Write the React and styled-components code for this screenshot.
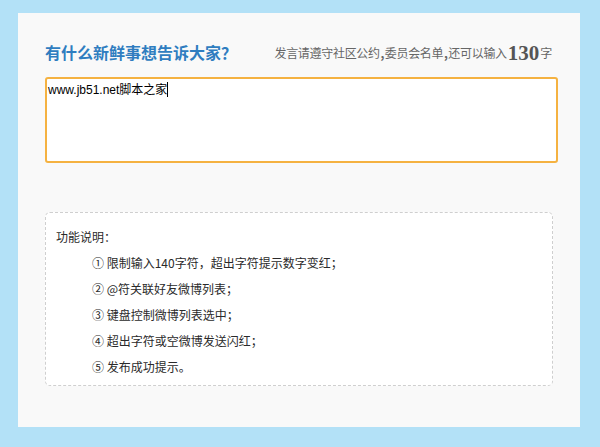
import React from "react";
import styled, { createGlobalStyle } from "styled-components";

const Global = createGlobalStyle`
  html, body { margin: 0; padding: 0; background: #b3e1f7; }
  body { font-family: "Liberation Sans", Arial, "Noto Sans CJK SC", sans-serif; }
`;

const Page = styled.div`
  padding: 13px 0 20px 18px;
`;

const Panel = styled.div`
  box-sizing: border-box;
  width: 562px;
  height: 414px;
  background: #f9f9f9;
  padding: 27px 22px 0 27px;
`;

const Header = styled.div`
  display: flex;
  align-items: center;
  justify-content: space-between;
  height: 24px;
  padding-right: 6px;
  margin-bottom: 13px;
`;

const Title = styled.h2`
  margin: 0;
  font-family: "Noto Sans CJK SC", sans-serif;
  font-size: 16px;
  font-weight: 700;
  letter-spacing: 0;
  color: #2f7dc0;
  line-height: 24px;
`;

const Counter = styled.div`
  display: flex;
  align-items: center;
  font-family: "Noto Sans CJK SC", sans-serif;
  font-size: 12px;
  color: #666;
  letter-spacing: -0.3px;
`;

const Comma = styled.span`
  display: inline-block;
  width: 5px;
  text-align: center;
  font-weight: 700;
`;

const Count = styled.span`
  font-family: "Liberation Serif", "DejaVu Serif", serif;
  font-size: 21px;
  font-weight: 700;
  color: #555;
  letter-spacing: 0;
  margin: 2px 1px 0;
  line-height: 20px;
`;

const Input = styled.div`
  box-sizing: border-box;
  width: 513px;
  height: 86px;
  background: #fff;
  border: 2px solid #f5b241;
  border-radius: 3px;
  padding: 3px 1px;
  font-size: 12px;
  line-height: 14px;
  color: #000;
`;

const Caret = styled.span`
  display: inline-block;
  width: 1px;
  height: 15px;
  background: #000;
  vertical-align: -3px;
`;

const Info = styled.div`
  box-sizing: border-box;
  width: 508px;
  height: 174px;
  margin-top: 49px;
  background: #fff;
  border: 1px dashed #cfcfcf;
  border-radius: 5px;
  padding: 11px 10px 0 10px;
  font-family: "Noto Sans CJK SC", sans-serif;
  font-size: 12px;
  line-height: 26px;
  color: #2a2a2a;
`;

const InfoTitle = styled.div``;

const List = styled.ul`
  list-style: none;
  margin: 0;
  padding: 0 0 0 36px;
`;

const Item = styled.li``;

const items = [
  "① 限制输入140字符，超出字符提示数字变红；",
  "② @符关联好友微博列表；",
  "③ 键盘控制微博列表选中；",
  "④ 超出字符或空微博发送闪红；",
  "⑤ 发布成功提示。",
];

export default function App() {
  return (
    <>
      <Global />
      <Page>
        <Panel>
          <Header>
            <Title>有什么新鲜事想告诉大家？</Title>
            <Counter>
              发言请遵守社区公约<Comma>,</Comma>委员会名单<Comma>,</Comma>还可以输入
              <Count>130</Count>字
            </Counter>
          </Header>
          <Input>
            www.jb51.net脚本之家<Caret />
          </Input>
          <Info>
            <InfoTitle>功能说明：</InfoTitle>
            <List>
              {items.map((t) => (
                <Item key={t}>{t}</Item>
              ))}
            </List>
          </Info>
        </Panel>
      </Page>
    </>
  );
}
